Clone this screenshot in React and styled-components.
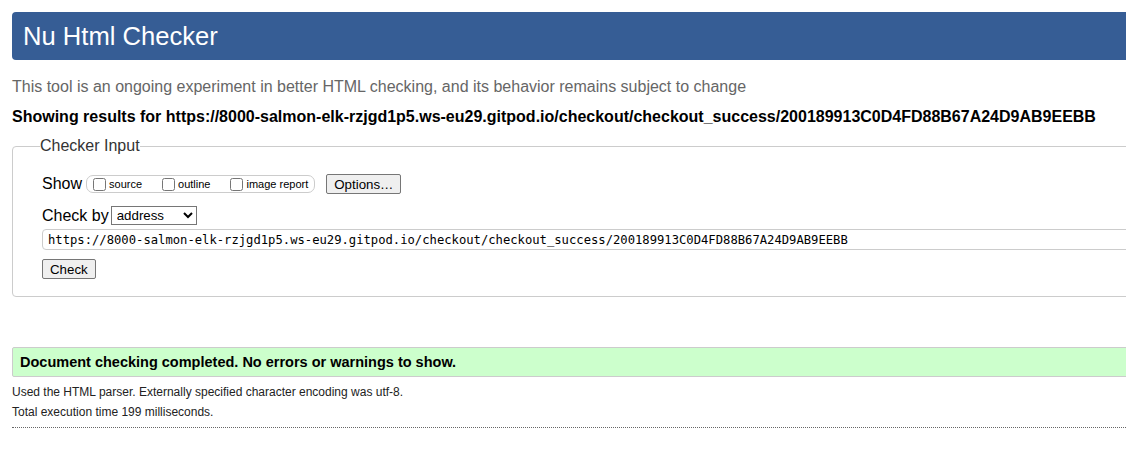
import styled, { createGlobalStyle } from "styled-components";

const GlobalStyle = createGlobalStyle`
  html, body {
    margin: 0;
    padding: 0;
    background: #fff;
    overflow: hidden;
  }
  body {
    font-family: "Liberation Sans", Arial, sans-serif;
    color: #000;
  }
`;

const Page = styled.main`
  width: 1140px;
  padding: 12px 0 0 12px;
`;

const Header = styled.h1`
  margin: 0;
  height: 48px;
  display: flex;
  align-items: center;
  padding: 0 11px;
  background: #365d95;
  color: #fff;
  font-size: 25.6px;
  font-weight: normal;
  border-radius: 4px;
`;

const Intro = styled.p`
  margin: 17px 0 0;
  color: #666;
  font-size: 16px;
  line-height: 19px;
`;

const Results = styled.p`
  margin: 11px 0 0;
  font-size: 16px;
  font-weight: bold;
  line-height: 19px;
`;

const Fieldset = styled.fieldset`
  margin: 11px 0 0;
  padding: 11px 0 17px 29px;
  border: 1px solid #ccc;
  border-radius: 4px;
`;

const Legend = styled.legend`
  margin-left: -2px;
  padding: 0;
  font-size: 16px;
  color: #333;
`;

const Row = styled.div`
  display: flex;
  align-items: center;
  gap: 2px;
  margin-top: ${(p) => p.$top || 0}px;
  font-size: 16px;
`;

const Options = styled.span`
  display: flex;
  align-items: center;
  height: 16px;
  margin-left: 2px;
  padding: 0 6px;
  border: 1px solid #ccc;
  border-radius: 7px;
  font-size: 11px;
`;

const Check = styled.label`
  display: flex;
  align-items: center;
  margin-right: ${(p) => p.$gap || 0}px;

  input {
    margin: 0 3px 0 0;
    width: 13px;
    height: 13px;
  }
`;

const Button = styled.button`
  font-family: "Liberation Sans", Arial, sans-serif;
  font-size: 13.3px;
  height: 20px;
  padding: 0 7px;
  margin-left: ${(p) => p.$left || 0}px;
  background: #efefef;
  border: 1px solid #767676;
  border-radius: 2px;
  color: #000;
`;

const Select = styled.select`
  font-family: "Liberation Sans", Arial, sans-serif;
  font-size: 13.3px;
  width: 86px;
  height: 19px;
  margin-left: 0;
  border: 1px solid #767676;
  border-radius: 0;
  background: #fff;
  color: #000;
  padding: 0 0 0 1px;
`;

const UrlInput = styled.input`
  display: block;
  width: 100%;
  box-sizing: border-box;
  margin-top: 4px;
  height: 21px;
  padding: 0 5px;
  border: 1px solid #ccc;
  border-radius: 4px;
  font-family: "DejaVu Sans Mono", monospace;
  font-size: 12.2px;
  color: #000;
`;

const CheckRow = styled.div`
  margin-top: 9px;
`;

const Success = styled.p`
  margin: 50px 0 0;
  padding: 0 7px;
  height: 28px;
  display: flex;
  align-items: center;
  background: #ccffcc;
  border: 1px solid #ccc;
  border-radius: 2px;
  font-size: 14.5px;
  font-weight: bold;
`;

const Detail = styled.p`
  margin: ${(p) => p.$top || 0}px 0 0;
  font-size: 12px;
  line-height: 14px;
  color: #222;
`;

const Divider = styled.hr`
  margin: 8px 0 0;
  border: 0;
  border-top: 1px dotted #666;
`;

const url =
  "https://8000-salmon-elk-rzjgd1p5.ws-eu29.gitpod.io/checkout/checkout_success/200189913C0D4FD88B67A24D9AB9EEBB";

export default function App() {
  return (
    <Page>
      <GlobalStyle />
      <Header>Nu Html Checker</Header>
      <Intro>
        This tool is an ongoing experiment in better HTML checking, and its
        behavior remains subject to change
      </Intro>
      <Results>Showing results for {url}</Results>
      <Fieldset>
        <Legend>Checker Input</Legend>
        <Row $top={8}>
          Show
          <Options>
            <Check $gap={20}>
              <input type="checkbox" />
              source
            </Check>
            <Check $gap={20}>
              <input type="checkbox" />
              outline
            </Check>
            <Check>
              <input type="checkbox" />
              image report
            </Check>
          </Options>
          <Button type="button" $left={9}>
            Options…
          </Button>
        </Row>
        <Row $top={12}>
          Check by
          <Select defaultValue="address">
            <option value="address">address</option>
            <option value="file">file upload</option>
            <option value="text">text input</option>
          </Select>
        </Row>
        <UrlInput type="url" defaultValue={url} />
        <CheckRow>
          <Button type="button">Check</Button>
        </CheckRow>
      </Fieldset>
      <Success>Document checking completed. No errors or warnings to show.</Success>
      <Detail $top={8}>
        Used the HTML parser. Externally specified character encoding was utf-8.
      </Detail>
      <Detail $top={6}>Total execution time 199 milliseconds.</Detail>
      <Divider />
    </Page>
  );
}
